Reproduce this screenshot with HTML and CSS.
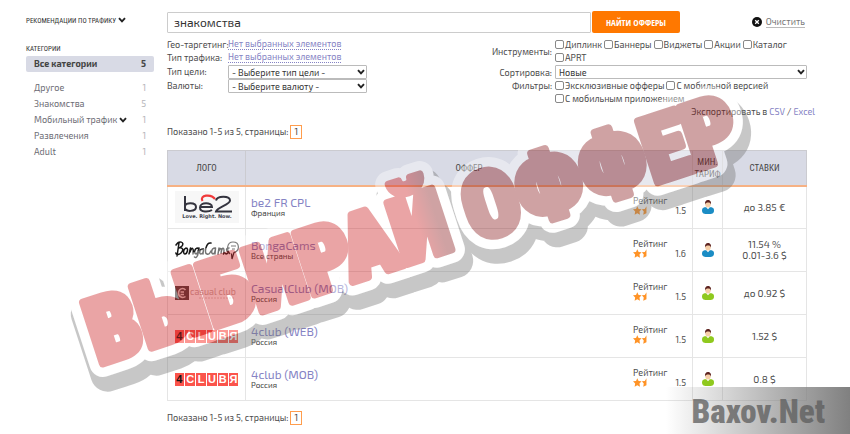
FILE: index.html
```
<!DOCTYPE html>
<html lang="ru">
<head>
<meta charset="utf-8">
<title>Офферы</title>
<link rel="stylesheet" href="styles.css">
</head>
<body>
<svg class="defs" aria-hidden="true">
  <symbol id="chevron" viewBox="0 0 8 6"><path d="M1 1.2 4 4.4 7 1.2" fill="none" stroke="#222" stroke-width="1.9"/></symbol>
  <symbol id="stars" viewBox="0 0 13 8">
    <path d="M4 0 5.200 2.500 8 2.800 6 4.900 6.500 8 4 6.500 1.500 8 2 4.900 0 2.800 2.800 2.500Z" fill="#ff9326"/>
    <path d="M12.500 0V6.500L9.500 8 10 4.900 8.200 2.800 11 2.500Z" fill="#ff9326"/>
  </symbol>
  <symbol id="person" viewBox="0 0 12 14">
    <path d="M0 10.500C0 7.500 2 7 6 7S12 7.500 12 10.500 10 14 6 14 0 13.500 0 10.500Z" fill="currentColor"/>
    <path d="M4 7 6 9.300 8 7Z" fill="#fff"/>
    <ellipse cx="6" cy="4.300" rx="2.700" ry="3.300" fill="#f6cfa8"/>
    <path d="M3.200 4.500C2.500 1.500 4 0 6 0S9.600 1.500 8.800 4.500C8.400 2.800 7.500 2.500 6 2.600 4.500 2.600 3.700 3 3.200 4.500Z" fill="#5d2320"/>
  </symbol>
</svg>

<div class="page">
  <aside class="sidebar">
    <a class="heading" href="#">Рекомендации по трафику <svg class="chev"><use href="#chevron"/></svg></a>
    <h2 class="heading">Категории</h2>
    <nav>
      <a class="cat active" href="#"><span>Все категории</span><span>5</span></a>
      <a class="cat" href="#"><span>Другое</span><span class="num">1</span></a>
      <a class="cat" href="#"><span>Знакомства</span><span class="num">5</span></a>
      <a class="cat" href="#"><span>Мобильный трафик <svg class="chev"><use href="#chevron"/></svg></span><span class="num">1</span></a>
      <a class="cat" href="#"><span>Развлечения</span><span class="num">1</span></a>
      <a class="cat" href="#"><span>Adult</span><span class="num">1</span></a>
    </nav>
  </aside>

  <main class="main">
    <form class="filters">
      <div class="search">
        <input class="query" type="text" aria-label="Поиск" value="знакомства">
        <button class="find" type="button">Найти офферы</button>
        <span class="clear">
          <svg width="10" height="10" viewBox="0 0 10 10"><circle cx="5" cy="5" r="5" fill="#111"/><path d="M3.200 3.200 6.800 6.800M6.800 3.200 3.200 6.800" stroke="#fff" stroke-width="1.300"/></svg>
          <a href="#">Очистить</a>
        </span>
      </div>
      <div class="options">
        <div class="left">
          <span>Гео-таргетинг:</span><a class="pick" href="#">Нет выбранных элементов</a>
          <span>Тип трафика:</span><a class="pick" href="#">Нет выбранных элементов</a>
          <label for="goal">Тип цели:</label>
          <span class="drop"><select id="goal"><option>- Выберите тип цели -</option></select><svg class="chev"><use href="#chevron"/></svg></span>
          <label for="cur">Валюты:</label>
          <span class="drop"><select id="cur"><option>- Выберите валюту -</option></select><svg class="chev"><use href="#chevron"/></svg></span>
        </div>
        <div class="right">
          <span class="name">Инструменты:</span>
          <div class="checks">
            <label><input type="checkbox">Диплинк</label><label><input type="checkbox">Баннеры</label><label><input type="checkbox">Виджеты</label><label><input type="checkbox">Акции</label><label><input type="checkbox">Каталог</label><label><input type="checkbox">APRT</label>
          </div>
          <label class="name" for="sort">Сортировка:</label>
          <span class="drop"><select id="sort"><option>Новые</option></select><svg class="chev"><use href="#chevron"/></svg></span>
          <span class="name top">Фильтры:</span>
          <div class="checks">
            <label><input type="checkbox">Эксклюзивные офферы</label><label><input type="checkbox">С мобильной версией</label><label><input type="checkbox">С мобильным приложением</label>
          </div>
        </div>
      </div>
    </form>
    <p class="export">Экспортировать в <a href="#">CSV</a> / <a href="#">Excel</a></p>
    <p class="pager">Показано 1-5 из 5, страницы: <a href="#">1</a></p>

    <table class="offers">
      <colgroup><col class="c-logo"><col><col class="c-plan"><col class="c-rate"></colgroup>
      <thead><tr><th>Лого</th><th>Оффер</th><th>Мин. тариф</th><th>Ставки</th></tr></thead>
      <tbody>
        <tr>
          <td class="logo"><svg width="64" height="32" viewBox="0 0 64 32"><rect width="64" height="32" fill="#f7f7f7"/>
            <g fill="none" stroke="#34343f" stroke-width="2"><path d="M10 5V20M10 15.500C10 11 21 11 21 16S10 21 10 17M25 16H37C37 11 25 11 25 16.500S34 21 37 19M41 9.500C42 4.500 55 4.500 55 9.500 55 14 42 16 41 20.500H57"/></g>
            <path d="M27.500 10C24 4 36 2.500 40 8" fill="none" stroke="#f0393a" stroke-width="2.200"/>
            <text x="32" y="27" text-anchor="middle" font-family="DejaVu Sans" font-size="5" font-weight="700" fill="#444650">Love. Right. Now.</text></svg></td>
          <td><div class="offer"><div><a class="title" href="#">be2 FR CPL</a><small>Франция</small></div><div class="rating">Рейтинг<div><svg class="stars"><use href="#stars"/></svg><span>1.5</span></div></div></div></td>
          <td><svg class="person blue"><use href="#person"/></svg></td><td class="rate">до 3.85 €</td>
        </tr>
        <tr>
          <td class="logo"><svg width="64" height="20" viewBox="0 0 64 20"><g fill="none" stroke="#171717" stroke-width="1.500" stroke-linecap="round" stroke-linejoin="round"><path d="M4 3 2 16M1 5C4 0 10 2 7 6 5 8 4 8 3.500 8 8 7 9 10 6 13 4 15 1 15 .8 13M11 8C8 9 8 14 10 14S14 8 11 8M14 14 15.500 8 15 12C17 6 19 8 18 14M23 8C19 8 19 14 21 14 22.500 14 23.500 10 24 8 23.500 14 22 19 19.500 17M28 9C24 9 24 14 26 14S28.500 10 28.500 9L28 14M36 3C31 2 29 13 32 14S35 12 36 11M40 8C36 8 36 14 38 14S40.500 9 40.500 8L40 14M43 14 44 8 43.800 11C46 6 47 9 46 13 47 6 50 7 48.500 14M54 8C50 8 52 11 53 12S51 15 50 13"/></g><path d="M55 14C51 10 52 2 58 2 65 2 65 11 59 12.500L57 19 56.500 13.500M56 6H61M57 9H60" fill="none" stroke="#222" stroke-width="1.200"/></svg></td>
          <td><div class="offer"><div><a class="title" href="#">BongaCams</a><small>Все страны</small></div><div class="rating">Рейтинг<div><svg class="stars"><use href="#stars"/></svg><span>1.6</span></div></div></div></td>
          <td><svg class="person blue"><use href="#person"/></svg></td><td class="rate">11.54 %<br>0.01-3.6 $</td>
        </tr>
        <tr>
          <td class="logo"><svg width="64" height="14" viewBox="0 0 64 14"><rect width="14" height="14" fill="#443d3d"/><path d="M10.500 4C8 1 3.500 3 3.500 7S8 12.500 10.500 10.500M5.500 6H9M5.500 8.500H9" fill="none" stroke="#ddd2cc" stroke-width="1.600"/><text x="15" y="9" font-family="Exo 2, Noto Sans" font-size="9" fill="#c9aaa4">casual club</text><path d="M24 12H60" stroke="#e2cac6" stroke-dasharray="2 1"/></svg></td>
          <td><div class="offer"><div><a class="title" href="#">CasualClub (MOB)</a><small>Россия</small></div><div class="rating">Рейтинг<div><svg class="stars"><use href="#stars"/></svg><span>1.5</span></div></div></div></td>
          <td><svg class="person green"><use href="#person"/></svg></td><td class="rate">до 0.92 $</td>
        </tr>
        <tr>
          <td class="logo"><div class="club"><b class="four">4</b><b>C</b><b>L</b><b>U</b><b>B</b><b>Я</b></div></td>
          <td><div class="offer"><div><a class="title" href="#">4club (WEB)</a><small>Россия</small></div><div class="rating">Рейтинг<div><svg class="stars"><use href="#stars"/></svg><span>1.5</span></div></div></div></td>
          <td><svg class="person green"><use href="#person"/></svg></td><td class="rate">1.52 $</td>
        </tr>
        <tr>
          <td class="logo"><div class="club"><b class="four">4</b><b>C</b><b>L</b><b>U</b><b>B</b><b>Я</b></div></td>
          <td><div class="offer"><div><a class="title" href="#">4club (MOB)</a><small>Россия</small></div><div class="rating">Рейтинг<div><svg class="stars"><use href="#stars"/></svg><span>1.5</span></div></div></div></td>
          <td><svg class="person green"><use href="#person"/></svg></td><td class="rate">0.8 $</td>
        </tr>
      </tbody>
    </table>
    <p class="pager">Показано 1-5 из 5, страницы: <a href="#">1</a></p>
  </main>
</div>

<svg class="stamp" viewBox="0 0 850 434">
  <defs><linearGradient id="ink"><stop offset=".51" stop-color="#cb1d20"/><stop offset=".54" stop-color="#891a1c"/></linearGradient></defs>
  <g opacity=".4" transform="rotate(-18.100 102 368)" stroke-linejoin="round">
    <text class="word back" x="101" y="376">ВЫБИРАЙ ОФФЕР</text>
    <text class="word halo" x="100" y="364">ВЫБИРАЙ ОФФЕР</text>
    <text class="word ink" x="100" y="364">ВЫБИРАЙ ОФФЕР</text>
  </g>
</svg>
<div class="site">Baxov.Net</div>
</body>
</html>
```
FILE: styles.css
```
* { box-sizing: border-box; }
body {
  margin: 0;
  position: relative;
  min-height: 100vh;
  overflow-x: hidden;
  background: #fff;
  color: #4c4c4c;
  font: 9px/13px "Exo 2", "Noto Sans", sans-serif;
}
a { color: #8583c4; text-decoration: none; }
p { margin: 0; }
.defs { position: absolute; width: 0; height: 0; }
.chev { width: 8px; height: 6px; }

.page { display: flex; gap: 13px; padding: 11px 43px 0 26px; }
.sidebar { flex: 0 0 128px; padding-top: 4px; }
.heading {
  display: block;
  margin: 0;
  color: #333;
  font: 400 7px/12px "Roboto Condensed", "Open Sans Condensed", sans-serif;
  text-transform: uppercase;
  white-space: nowrap;
}
h2.heading { margin-top: 16px; }
.cat {
  display: flex;
  justify-content: space-between;
  padding: 0 8px;
  line-height: 16px;
  color: #6c6c74;
}
.num { color: #b4b4b8; }
.cat.active {
  margin: 1px 0 8px;
  background: #d8dae5;
  border-radius: 2px;
  color: #444;
  font-weight: 700;
}

.main { flex: 1; min-width: 0; }
.search { display: flex; align-items: center; gap: 1px; height: 22px; }
.query {
  flex: 0 1 424px;
  height: 21px;
  padding: 0 6px;
  border: 1px solid #ccc;
  border-radius: 1px;
  color: #333;
  font: 12px "Exo 2", "Noto Sans", sans-serif;
}
.find {
  width: 88px;
  height: 22px;
  padding: 0;
  border: 0;
  border-radius: 2px;
  background: #ff7800;
  color: #fff;
  font: 700 9px "Open Sans Condensed", "Roboto Condensed", sans-serif;
  text-transform: uppercase;
}
.clear { display: flex; align-items: center; gap: 4px; margin: 0 2px 0 auto; }
.clear a { color: #777; border-bottom: 1px solid #bbb; line-height: 10px; }

.options { display: flex; justify-content: space-between; margin-top: 5px; }
.left { display: grid; grid-template-columns: 61px 139px; grid-template-rows: 13px 14px 14px 14px; line-height: 13px; }
.left > span, .left > label { white-space: nowrap; }
.pick { justify-self: start; height: 12px; line-height: 12px; border-bottom: 1px dotted #8583c4; white-space: nowrap; }
.right { display: grid; grid-template-columns: 64px 252px; column-gap: 3px; grid-template-rows: 27px 14px auto; }
.name { align-self: center; text-align: right; }
.name.top { align-self: start; }
.drop { display: flex; position: relative; }
.drop select {
  width: 100%;
  height: 14px;
  padding: 0 3px;
  appearance: none;
  border: 1px solid #bbb;
  border-radius: 1px;
  background: #fff;
  color: #333;
  font: 9px "Exo 2", "Noto Sans", sans-serif;
}
.drop .chev { position: absolute; right: 2px; top: 4px; }
.checks { display: flex; flex-wrap: wrap; column-gap: 2px; align-content: start; }
.checks label { display: flex; align-items: center; gap: 1px; height: 13px; white-space: nowrap; }
.checks input {
  width: 9px;
  height: 9px;
  margin: 0;
  appearance: none;
  border: 1px solid #888;
  border-radius: 2px;
  background: #fff;
}

.export { margin-right: -8px; text-align: right; }
.pager { margin-top: 7px; }
.pager a {
  display: inline-block;
  width: 12px;
  border: 1px solid #ff9d4d;
  color: #444;
  line-height: 12px;
  text-align: center;
}
.offers {
  width: 100%;
  margin: 11px 0 10px;
  border-collapse: collapse;
  table-layout: fixed;
}
.c-logo { width: 78px; }
.c-plan { width: 30px; }
.c-rate { width: 84px; }
.offers th, .offers td { padding: 0; border: 1px solid #e5e5e5; text-align: center; }
.offers th {
  height: 35px;
  background: #d8dae5;
  border-color: #cbcbd0;
  border-bottom: 2px solid #f6b184;
  color: #444;
  font: 400 9px/12px "Roboto Condensed", "Open Sans Condensed", sans-serif;
  text-transform: uppercase;
}
.offers td { height: 43px; }
.offers td svg { display: block; margin: 0 auto; }
.offer { display: flex; justify-content: space-between; padding: 0 6px 0 5px; text-align: left; }
.title { display: block; font-size: 12px; line-height: 12px; }
.offer small { display: block; color: #444; font-size: 8px; line-height: 10px; }
.rating { width: 53px; line-height: 9px; }
.rating div { display: flex; justify-content: space-between; }
.offers .stars { width: 14px; height: 9px; margin: 1px 0 0; }
.rating span { line-height: 12px; font-size: 9px; }
.person { width: 12px; height: 14px; }
.blue { color: #1b8cc4; }
.green { color: #8fc91e; }
.offers .rate { font-size: 10px; line-height: 11px; }
.club { display: flex; gap: 1px; width: 64px; margin: 0 auto; }
.club b {
  flex: 1;
  background: #fb544c;
  color: #fff;
  font: 700 11px/13px "Liberation Sans", sans-serif;
}
.club .four { color: #151515; }

.stamp { position: absolute; left: 0; top: 0; width: 100%; pointer-events: none; }
.word { font: 900 90px "Roboto Condensed", "Open Sans Condensed", sans-serif; }
.back { fill: #757575; stroke: #757575; stroke-width: 34px; }
.halo { fill: #fff; stroke: #fff; stroke-width: 27px; }
.ink { fill: url(#ink); stroke: url(#ink); stroke-width: 8px; }
.site {
  position: absolute;
  right: 0;
  bottom: 0;
  width: 184px;
  height: 47px;
  padding-right: 25px;
  background: linear-gradient(90deg, #80808000, #808080);
  color: #5c5c5cc0;
  font: 900 33px/50px "Roboto Condensed", "Open Sans Condensed", sans-serif;
  text-align: right;
}
```
